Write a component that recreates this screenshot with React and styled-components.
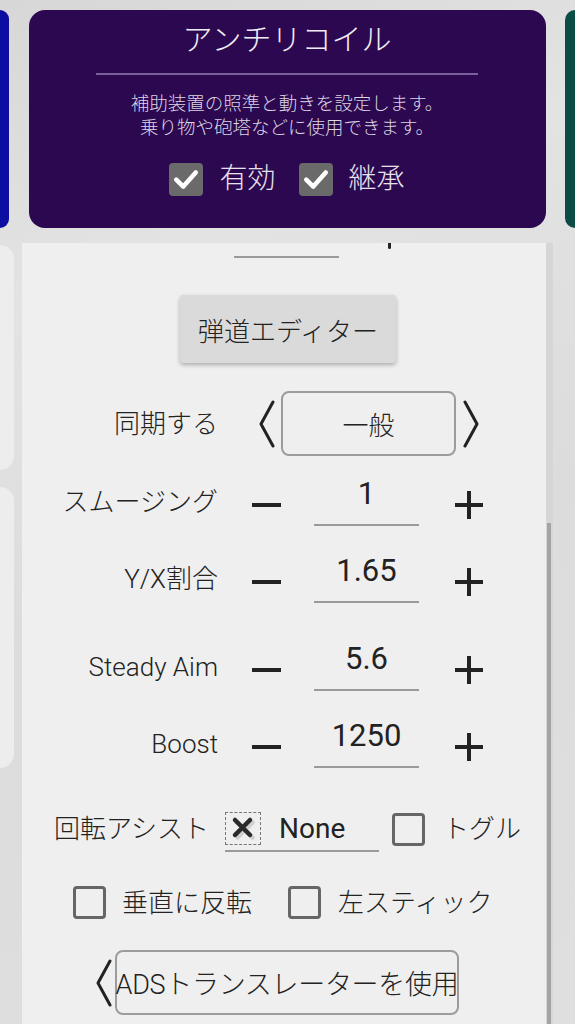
import React from 'react';
import styled, { createGlobalStyle } from 'styled-components';

const Global = createGlobalStyle`
  html, body { margin: 0; padding: 0; }
  body {
    background: #dedede;
    font-family: Roboto, "Noto Sans CJK JP", sans-serif;
    color: #222;
  }
`;

const Page = styled.div`
  width: 575px;
  height: 1024px;
  overflow: hidden;
  display: flex;
  flex-direction: column;
  background: linear-gradient(160deg, #d7d7d7 0%, #e3e3e3 25%, #dcdcdc 55%, #dfdfdf 100%);
`;

const TopRow = styled.div`
  display: flex;
  justify-content: space-between;
  height: 218px;
  margin-top: 10px;
`;

const SideTab = styled.div`
  width: ${p => p.$w}px;
  background: ${p => p.$color};
  border-radius: ${p => (p.$side === 'left' ? '0 14px 14px 0' : '14px 0 0 14px')};
`;

const Card = styled.section`
  width: 517px;
  box-sizing: border-box;
  background: #2c0850;
  border-radius: 16px;
  display: flex;
  flex-direction: column;
  align-items: center;
  padding-top: 11px;
  color: #eeeeee;
`;

const CardTitle = styled.h1`
  margin: 0;
  font-size: 30px;
  line-height: 38px;
  font-weight: 300;
  color: #f0ecf4;
`;

const Divider = styled.div`
  width: 382px;
  height: 2px;
  margin-top: 14px;
  background: #7b5f98;
`;

const Desc = styled.p`
  margin: 17px 0 0;
  font-size: 18.5px;
  line-height: 24px;
  font-weight: 300;
  text-align: center;
  color: #dcd5e4;
`;

const CardChecks = styled.div`
  display: flex;
  align-items: center;
  margin-top: 22px;
`;

const CheckedBox = styled.span`
  width: 34px;
  height: 33px;
  border-radius: 4px;
  background: #6a6a6a;
  display: flex;
  align-items: center;
  justify-content: center;
  margin-left: ${p => p.$ml || 0}px;
`;

const CardCheckLabel = styled.span`
  font-size: 28px;
  line-height: 34px;
  font-weight: 300;
  margin-left: ${p => p.$ml || 0}px;
  color: #e6e1ec;
`;

const Lower = styled.div`
  display: flex;
  margin-top: 15px;
  flex: 1;
  min-height: 0;
`;

const LeftStrip = styled.div`
  width: 14px;
  display: flex;
  flex-direction: column;
  gap: 17px;
  padding-top: 2px;
`;

const StripPanel = styled.div`
  height: ${p => p.$h}px;
  background: #ededed;
  border-radius: 0 16px 16px 0;
`;

const Main = styled.main`
  margin-left: 8px;
  width: 524px;
  background: #efefef;
  display: flex;
  flex-direction: column;
`;

const ScrollTrack = styled.div`
  width: 7px;
  background: #d6d6d6;
  display: flex;
  flex-direction: column;
  padding-top: 280px;
  box-sizing: border-box;
`;

const ScrollThumb = styled.div`
  margin-left: 1px;
  width: 4px;
  flex: 1;
  background: #a4a4a4;
`;

const Fragment = styled.div`
  height: 16px;
  display: flex;
  align-items: flex-start;
`;

const FragLine = styled.div`
  margin-left: 212px;
  margin-top: 13px;
  width: 105px;
  height: 2px;
  background: #9a9a9a;
`;

const FragMark = styled.div`
  margin-left: 49px;
  width: 3px;
  height: 6px;
  border-radius: 0 0 2px 2px;
  background: #222;
`;

const EditorButton = styled.button`
  margin: 36px 0 0 158px;
  align-self: flex-start;
  width: 216px;
  height: 68px;
  border: none;
  border-radius: 4px;
  background: #dadada;
  box-shadow: 0 2px 4px rgba(0, 0, 0, 0.28);
  font-family: inherit;
  font-size: 26px;
  font-weight: 300;
  color: #222;
  padding: 0;
`;

const Row = styled.div`
  display: flex;
  align-items: center;
  margin-top: ${p => p.$mt}px;
  height: ${p => p.$h}px;
`;

const Label = styled.span`
  width: 196px;
  flex: none;
  text-align: right;
  font-size: 26px;
  line-height: 34px;
  font-weight: 300;
  white-space: nowrap;
`;

const Chevron = styled.svg`
  flex: none;
  margin-left: ${p => p.$ml}px;
  width: 17px;
  height: 48px;
`;

const SelectBox = styled.div`
  flex: none;
  margin-left: ${p => p.$ml}px;
  width: ${p => p.$w}px;
  height: 65px;
  box-sizing: border-box;
  border: 2px solid #9c9c9c;
  border-radius: 8px;
  display: flex;
  align-items: center;
  justify-content: center;
  font-size: ${p => p.$fs}px;
  font-weight: 300;
  white-space: nowrap;
  letter-spacing: ${p => p.$ls || 0}px;
`;

const StepIcon = styled.svg`
  flex: none;
  margin-left: ${p => p.$ml}px;
  margin-top: ${p => p.$mt || 0}px;
`;

const ValueField = styled.div`
  flex: none;
  margin-left: 33px;
  width: 105px;
  height: 48px;
  box-sizing: border-box;
  border-bottom: 2px solid #9a9a9a;
  text-align: center;
  font-size: 31px;
  line-height: 30px;
  font-weight: 400;
  padding-top: 1px;
`;

const FlowRow = styled.div`
  display: flex;
  align-items: center;
  margin-top: ${p => p.$mt}px;
  padding-left: ${p => p.$pl}px;
  height: ${p => p.$h}px;
`;

const FlowLabel = styled.span`
  margin-left: ${p => p.$ml || 0}px;
  font-size: 26px;
  line-height: 34px;
  font-weight: 300;
  white-space: nowrap;
`;

const Combo = styled.div`
  margin-left: 16px;
  width: 154px;
  height: 46px;
  box-sizing: border-box;
  border-bottom: 2px solid #9a9a9a;
  display: flex;
  align-items: center;
`;

const ClearBox = styled.span`
  width: 36px;
  height: 33px;
  box-sizing: border-box;
  border: 1px dashed #777;
  display: flex;
  align-items: center;
  justify-content: center;
`;

const ComboText = styled.span`
  margin-left: 18px;
  font-size: 28px;
  font-weight: 400;
`;

const EmptyBox = styled.span`
  flex: none;
  margin-left: ${p => p.$ml || 0}px;
  width: 33px;
  height: 33px;
  box-sizing: border-box;
  border: 3px solid #666;
  border-radius: 4px;
`;

const Check = () => (
  <svg width="26" height="26" viewBox="0 0 24 24">
    <path d="M3 12.5 L9.5 19 L21 6" fill="none" stroke="#fff" strokeWidth="4.2" strokeLinecap="round" strokeLinejoin="round" />
  </svg>
);

const LeftChevron = ({ ml }) => (
  <Chevron $ml={ml} viewBox="0 0 17 48">
    <path d="M15 2 L3 24 L15 46" fill="none" stroke="#222" strokeWidth="3" strokeLinecap="round" strokeLinejoin="round" />
  </Chevron>
);

const RightChevron = ({ ml }) => (
  <Chevron $ml={ml} viewBox="0 0 17 48">
    <path d="M2 2 L14 24 L2 46" fill="none" stroke="#222" strokeWidth="3" strokeLinecap="round" strokeLinejoin="round" />
  </Chevron>
);

const Minus = () => (
  <StepIcon $ml={34} $mt={6} width="29" height="6" viewBox="0 0 29 6">
    <rect x="0" y="1" width="29" height="4" fill="#222" />
  </StepIcon>
);

const Plus = () => (
  <StepIcon $ml={36} $mt={6} width="28" height="28" viewBox="0 0 28 28">
    <rect x="0" y="12" width="28" height="4" fill="#222" />
    <rect x="12" y="0" width="4" height="28" fill="#222" />
  </StepIcon>
);

const Stepper = ({ label, value, mt }) => (
  <Row $mt={mt} $h={48}>
    <Label>{label}</Label>
    <Minus />
    <ValueField>{value}</ValueField>
    <Plus />
  </Row>
);

export default function App() {
  return (
    <Page>
      <Global />
      <TopRow>
        <SideTab $w={9} $color="#0b0ea0" $side="left" />
        <Card>
          <CardTitle>アンチリコイル</CardTitle>
          <Divider />
          <Desc>
            補助装置の照準と動きを設定します。
            <br />
            乗り物や砲塔などに使用できます。
          </Desc>
          <CardChecks>
            <CheckedBox><Check /></CheckedBox>
            <CardCheckLabel $ml={16}>有効</CardCheckLabel>
            <CheckedBox $ml={23}><Check /></CheckedBox>
            <CardCheckLabel $ml={16}>継承</CardCheckLabel>
          </CardChecks>
        </Card>
        <SideTab $w={10} $color="#0b4c44" $side="right" />
      </TopRow>
      <Lower>
        <LeftStrip>
          <StripPanel $h={225} />
          <StripPanel $h={281} />
        </LeftStrip>
        <Main>
          <Fragment>
            <FragLine />
            <FragMark />
          </Fragment>
          <EditorButton>弾道エディター</EditorButton>
          <Row $mt={28} $h={65}>
            <Label>同期する</Label>
            <LeftChevron ml={40} />
            <SelectBox $ml={6} $w={175} $fs={26}>一般</SelectBox>
            <RightChevron ml={7} />
          </Row>
          <Stepper label="スムージング" value="1" mt={22} />
          <Stepper label="Y/X割合" value="1.65" mt={29} />
          <Stepper label="Steady Aim" value="5.6" mt={40} />
          <Stepper label="Boost" value="1250" mt={29} />
          <FlowRow $mt={38} $pl={32} $h={46}>
            <FlowLabel>回転アシスト</FlowLabel>
            <Combo>
              <ClearBox>
                <svg width="26" height="26" viewBox="0 0 26 26">
                  <path d="M6 6 L21 21 M21 6 L6 21" stroke="#cfcfcf" strokeWidth="4.5" strokeLinecap="round" transform="translate(1.5 1.5)" />
                  <path d="M5 5 L20 20 M20 5 L5 20" stroke="#2a2a2a" strokeWidth="4.5" strokeLinecap="round" />
                </svg>
              </ClearBox>
              <ComboText>None</ComboText>
            </Combo>
            <EmptyBox $ml={13} />
            <FlowLabel $ml={18}>トグル</FlowLabel>
          </FlowRow>
          <FlowRow $mt={34} $pl={51} $h={33}>
            <EmptyBox />
            <FlowLabel $ml={16}>垂直に反転</FlowLabel>
            <EmptyBox $ml={36} />
            <FlowLabel $ml={17}>左スティック</FlowLabel>
          </FlowRow>
          <Row $mt={31} $h={65}>
            <LeftChevron ml={73} />
            <SelectBox $ml={3} $w={344} $fs={27} $ls={-0.3}>ADSトランスレーターを使用</SelectBox>
          </Row>
        </Main>
        <ScrollTrack>
          <ScrollThumb />
        </ScrollTrack>
      </Lower>
    </Page>
  );
}
